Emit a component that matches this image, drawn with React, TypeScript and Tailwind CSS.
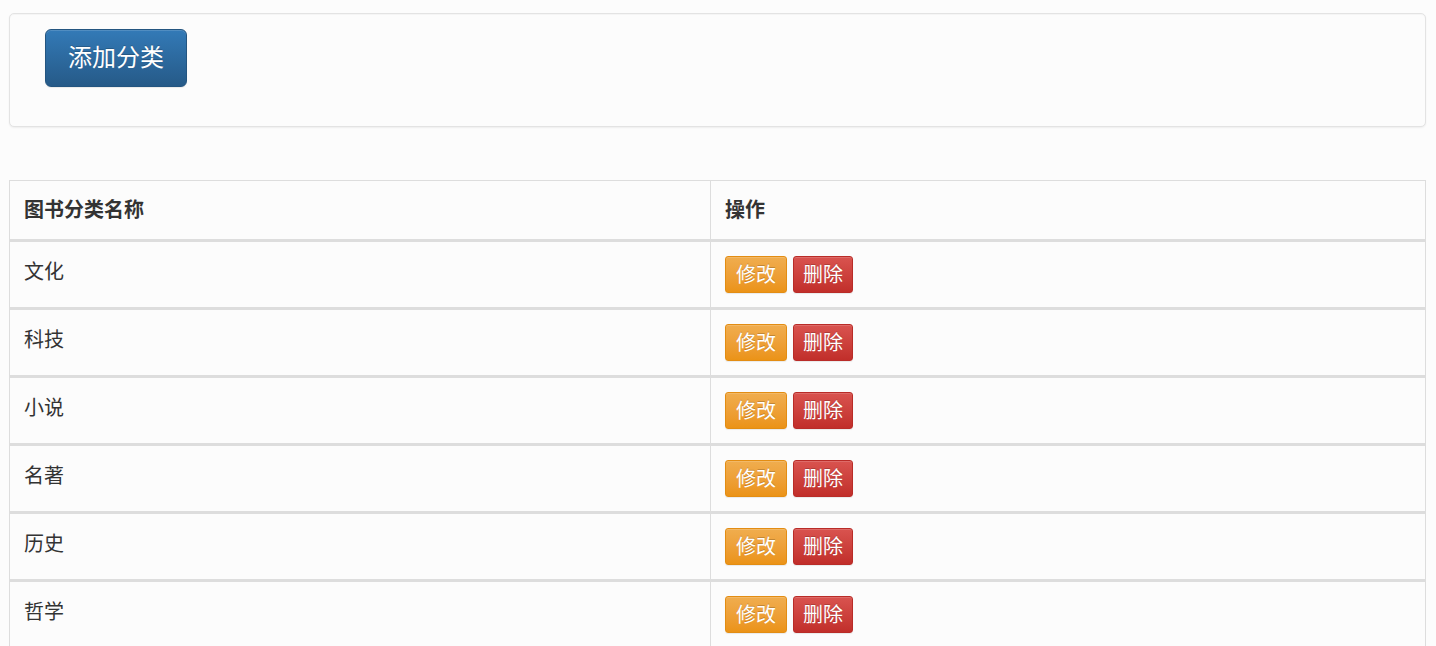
import React from 'react';

const categories = ['文化', '科技', '小说', '名著', '历史', '哲学'];

const font = { fontFamily: '"Liberation Sans", "Noto Sans CJK SC", sans-serif' };

const btn =
  'h-[37px] rounded-[3px] border text-white text-[20px] leading-[28px] shadow-[inset_0_1px_0_rgba(255,255,255,0.15),0_1px_1px_rgba(0,0,0,0.075)] [text-shadow:0_-1px_0_rgba(0,0,0,0.2)]';

export default function App() {
  return (
    <div className="min-h-screen bg-[#fcfcfc] text-[#333] pt-[13px] pl-[9px] pr-[10px]" style={font}>
      {/* Toolbar well */}
      <div className="h-[114px] rounded-[5px] border border-[#e3e3e3] bg-[#fcfcfc] shadow-[inset_0_1px_1px_rgba(0,0,0,0.03),0_1px_2px_rgba(0,0,0,0.06)] pl-[35px] pt-[15px]">
        <button className="h-[58px] px-[22px] rounded-[6px] border border-[#245580] bg-gradient-to-b from-[#337ab7] to-[#265a88] text-white text-[24px] leading-[32px] shadow-[inset_0_1px_0_rgba(255,255,255,0.15),0_1px_1px_rgba(0,0,0,0.075)] [text-shadow:0_-1px_0_rgba(0,0,0,0.2)]">
          添加分类
        </button>
      </div>

      {/* Category table */}
      <table className="mt-[53px] w-full border-separate border-spacing-0 border border-[#ddd] text-[20px] leading-[28px]">
        <thead>
          <tr>
            <th className="w-[700px] border-b-[3px] border-[#ddd] px-[14px] py-[15px] text-left font-bold">图书分类名称</th>
            <th className="border-b-[3px] border-l border-[#ddd] px-[14px] py-[15px] text-left font-bold">操作</th>
          </tr>
        </thead>
        <tbody>
          {categories.map((name) => (
            <tr key={name}>
              <td className="border-b-[3px] border-[#ddd] px-[14px] pt-[16px] pb-[14px] align-top">{name}</td>
              <td className="border-b-[3px] border-l border-[#ddd] px-[14px] py-[14px] align-top">
                <div className="flex gap-[6px]">
                  <button className={`${btn} px-[10px] border-[#e38d13] bg-gradient-to-b from-[#f0ad4e] to-[#eb9316]`}>
                    修改
                  </button>
                  <button className={`${btn} px-[9px] border-[#b92c28] bg-gradient-to-b from-[#d9534f] to-[#c12e2a]`}>
                    删除
                  </button>
                </div>
              </td>
            </tr>
          ))}
        </tbody>
      </table>
    </div>
  );
}
